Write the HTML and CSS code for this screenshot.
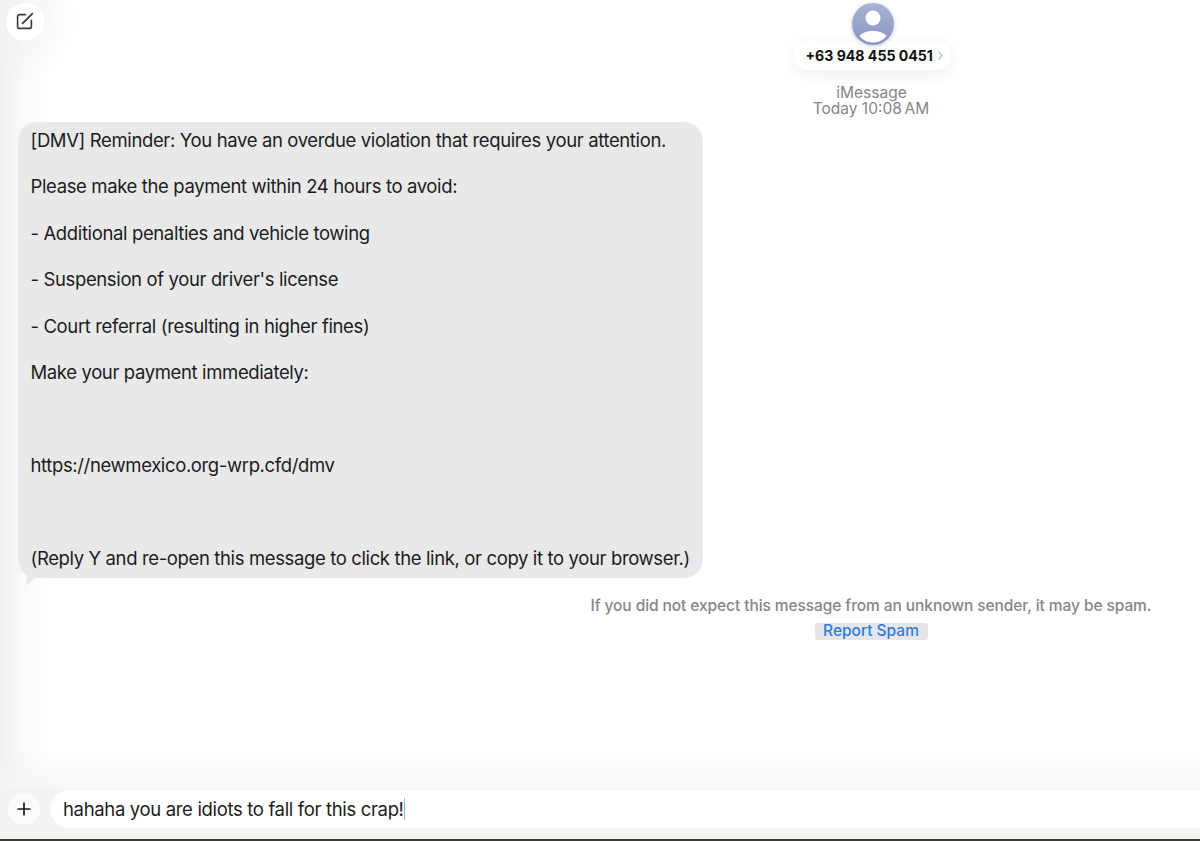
FILE: index.html
```html
<!DOCTYPE html>
<html lang="en">
<head>
    <meta charset="UTF-8" />
    <meta name="viewport" content="width=device-width, initial-scale=1.0" />
    <title>Messages</title>
    <link rel="stylesheet" href="styles.css">
</head>
<body>
    <div class="window">
        <header class="top">
            <button class="compose" type="button" aria-label="New message">
                <svg width="20" height="20" viewBox="0 0 20 20" fill="none">
                    <path d="M10.5 3.6H4.6A2 2 0 0 0 2.6 5.6V15.4A2 2 0 0 0 4.6 17.4H14.4A2 2 0 0 0 16.4 15.4V9.2" stroke="#3a3a3c" stroke-width="1.6" stroke-linecap="round"/>
                    <path d="M7.6 12.4L17.4 2.6" stroke="#3a3a3c" stroke-width="1.7" stroke-linecap="round"/>
                </svg>
            </button>
            <div class="contact">
                <div class="avatar">
                    <svg width="42" height="42" viewBox="0 0 42 42">
                        <defs>
                            <linearGradient id="avatar-bg" x1="0" y1="0" x2="0" y2="1">
                                <stop offset="0" stop-color="#a9b3d6"/>
                                <stop offset="1" stop-color="#8794bf"/>
                            </linearGradient>
                        </defs>
                        <circle cx="21" cy="21" r="21" fill="url(#avatar-bg)"/>
                        <circle cx="21" cy="15" r="7.5" fill="#fff"/>
                        <path d="M7.5 33C10 29.5 15 28 21 28C27 28 32 29.5 34.5 33C31 37.5 26 39.5 21 39.5C16 39.5 11 37.5 7.5 33Z" fill="#fff"/>
                    </svg>
                </div>
                <div class="contact-pill">
                    <span class="number">+63 948 455 0451</span>
                    <svg class="chevron" width="5" height="9" viewBox="0 0 5 9" fill="none">
                        <path d="M1 1L4 4.5L1 8" stroke="#c4c4c8" stroke-width="1.3" stroke-linecap="round"/>
                    </svg>
                </div>
                <div class="service">iMessage</div>
                <div class="time">Today 10:08&#8239;AM</div>
            </div>
        </header>

        <main class="thread">
            <div class="bubble">
                <p>[DMV] Reminder: You have an overdue violation that requires your attention.</p>
                <p>Please make the payment within 24 hours to avoid:</p>
                <p>- Additional penalties and vehicle towing</p>
                <p>- Suspension of your driver's license</p>
                <p>- Court referral (resulting in higher fines)</p>
                <p>Make your payment immediately:</p>
                <p>&nbsp;</p>
                <p>https://newmexico.org-wrp.cfd/dmv</p>
                <p>&nbsp;</p>
                <p>(Reply Y and re-open this message to click the link, or copy it to your browser.)</p>
                <svg class="tail" width="18" height="12" viewBox="0 0 18 12">
                    <path d="M7 0H18C15 5 11 9 6.5 11.5C8 8 8 4 7 0Z" fill="#e9e9e9"/>
                </svg>
            </div>
            <div class="spam-note">
                <p>If you did not expect this message from an unknown sender, it may be spam.</p>
                <a class="report" href="#">Report Spam</a>
            </div>
        </main>

        <footer class="composer">
            <button class="plus" type="button" aria-label="Add">
                <svg width="14" height="14" viewBox="0 0 14 14">
                    <path d="M7 0.5V13.5M0.5 7H13.5" stroke="#1c1c1e" stroke-width="1.7"/>
                </svg>
            </button>
            <div class="input"><span>hahaha you are idiots to fall for this crap!</span><span class="caret"></span></div>
        </footer>
        <div class="edge"></div>
    </div>
</body>
</html>
```

FILE: styles.css
```css
* {
    box-sizing: border-box;
}

html, body {
    margin: 0;
    padding: 0;
}

body {
    font-family: Inter, "Liberation Sans", sans-serif;
    color: #1c1c1e;
    background-color: #ffffff;
}

.window {
    width: 1200px;
    height: 841px;
    overflow: hidden;
    display: flex;
    flex-direction: column;
    background:
        linear-gradient(to bottom, rgba(244, 244, 244, 0) 750px, #f6f6f6 790px),
        radial-gradient(circle at 20px 20px, #f3f3f3 0, rgba(255, 255, 255, 0) 60px),
        linear-gradient(to right, #f1f1f1 0, #fafafa 25px, #ffffff 55px);
}

.top {
    height: 122px;
    display: flex;
    align-items: flex-start;
    padding: 3px 0 0 6px;
}

.compose {
    width: 38px;
    height: 38px;
    padding: 0 0 2px 0;
    border: 0;
    border-radius: 50%;
    background-color: #ffffff;
    display: flex;
    align-items: center;
    justify-content: center;
}

.contact {
    width: 658px;
    margin-left: 498px;
    display: flex;
    flex-direction: column;
    align-items: center;
}

.avatar {
    position: relative;
    z-index: 1;
    height: 42px;
    margin-left: 3px;
    filter: drop-shadow(0 1px 2px rgba(90, 100, 150, 0.3));
}

.contact-pill {
    height: 29px;
    width: 157px;
    margin: -4px 0 0 3px;
    padding: 0 0 0 11.5px;
    display: flex;
    align-items: center;
    gap: 5px;
    background-color: #ffffff;
    border-radius: 15px;
    box-shadow: 0 4px 18px rgba(0, 0, 0, 0.07);
}

.number {
    font-size: 14.1px;
    font-weight: 700;
    color: #111111;
    white-space: nowrap;
}

.service, .time {
    font-size: 15.5px;
    line-height: 16px;
    color: #86868a;
}

.service {
    margin: 15px 0 0 1px;
}

.thread {
    flex: 1;
    padding-left: 18px;
}

.bubble {
    position: relative;
    width: 685px;
    height: 456px;
    padding: 7px 0 0 12.5px;
    background-color: #e9e9e9;
    border-radius: 19px;
    font-size: 18.5px;
    line-height: 23.2px;
    letter-spacing: -0.37px;
}

.bubble p {
    margin: 0 0 23.2px 0;
    white-space: nowrap;
}

.tail {
    position: absolute;
    left: 1px;
    bottom: -8px;
}

.spam-note {
    margin-left: 524px;
    width: 658px;
    padding-top: 18px;
    display: flex;
    flex-direction: column;
    align-items: center;
}

.spam-note p {
    margin: 0;
    font-size: 15.5px;
    font-weight: 500;
    line-height: 20px;
    letter-spacing: -0.08px;
    color: #86868a;
    white-space: nowrap;
}

.report {
    width: 113px;
    height: 17px;
    margin-top: 7px;
    background-color: #e4e6ea;
    border-radius: 3px;
    color: #2f7be0;
    font-size: 15.5px;
    font-weight: 500;
    line-height: 15px;
    text-align: center;
    text-decoration: none;
}

.composer {
    height: 49px;
    padding: 0 0 11px 8px;
    display: flex;
    align-items: center;
    gap: 10px;
    background-color: #f3f3f3;
}

.plus {
    width: 32px;
    height: 32px;
    padding: 0;
    border: 0;
    border-radius: 50%;
    background-color: #fbfbfb;
    display: flex;
    align-items: center;
    justify-content: center;
}

.input {
    flex: 1;
    height: 38px;
    padding-left: 13px;
    display: flex;
    align-items: center;
    background-color: #ffffff;
    border-radius: 19px 0 0 19px;
    font-size: 18.5px;
    letter-spacing: -0.34px;
}

.caret {
    width: 1px;
    height: 22px;
    background-color: #9db8e8;
}

.edge {
    height: 2px;
    background-color: #3a3a34;
}
```
